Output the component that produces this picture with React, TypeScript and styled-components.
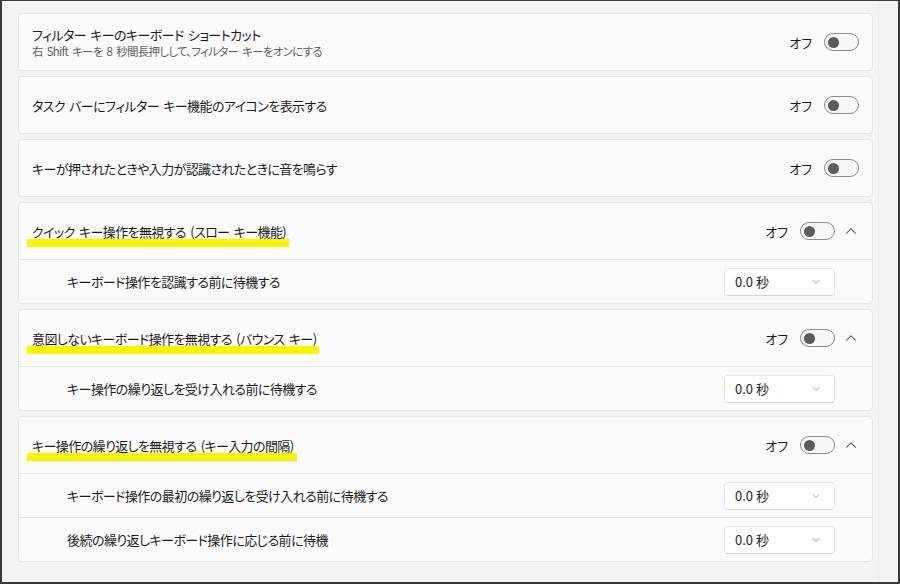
import React from 'react'
import styled, { createGlobalStyle } from 'styled-components'
import { ChevronUp, ChevronDown } from 'lucide-react'

interface SubSetting {
  label: string
  value: string
}

interface Setting {
  title: string
  description?: string
  highlight?: boolean
  subs?: SubSetting[]
}

const settings: Setting[] = [
  {
    title: 'フィルター キーのキーボード ショートカット',
    description: '右 Shift キーを 8 秒間長押しして、フィルター キーをオンにする',
  },
  { title: 'タスク バーにフィルター キー機能のアイコンを表示する' },
  { title: 'キーが押されたときや入力が認識されたときに音を鳴らす' },
  {
    title: 'クイック キー操作を無視する (スロー キー機能)',
    highlight: true,
    subs: [{ label: 'キーボード操作を認識する前に待機する', value: '0.0 秒' }],
  },
  {
    title: '意図しないキーボード操作を無視する (バウンス キー)',
    highlight: true,
    subs: [{ label: 'キー操作の繰り返しを受け入れる前に待機する', value: '0.0 秒' }],
  },
  {
    title: 'キー操作の繰り返しを無視する (キー入力の間隔)',
    highlight: true,
    subs: [
      { label: 'キーボード操作の最初の繰り返しを受け入れる前に待機する', value: '0.0 秒' },
      { label: '後続の繰り返しキーボード操作に応じる前に待機', value: '0.0 秒' },
    ],
  },
]

export default function App() {
  return (
    <>
      <GlobalStyle />
      <Frame>
        <Content>
          {settings.map((s, i) => (
            <Card key={i}>
              <Header hasSubs={!!s.subs}>
                <TextBlock>
                  <Title>{s.highlight ? <Marked>{s.title}</Marked> : s.title}</Title>
                  {s.description && <Description>{s.description}</Description>}
                </TextBlock>
                <StateLabel>オフ</StateLabel>
                <Toggle>
                  <Knob />
                </Toggle>
                {s.subs && (
                  <Expand>
                    <ChevronUp size={18} strokeWidth={1.4} />
                  </Expand>
                )}
              </Header>
              {s.subs &&
                s.subs.map((sub, j) => (
                  <SubRow key={j}>
                    <SubLabel>{sub.label}</SubLabel>
                    <Select>
                      <span>{sub.value}</span>
                      <ChevronDown size={12} strokeWidth={1.5} />
                    </Select>
                  </SubRow>
                ))}
            </Card>
          ))}
        </Content>
        <ScrollTrack />
      </Frame>
    </>
  )
}

const GlobalStyle = createGlobalStyle`
  html, body {
    margin: 0;
    padding: 0;
    background: #f3f3f3;
  }
  body {
    font-family: "Noto Sans CJK JP", "Noto Sans", sans-serif;
    font-feature-settings: "palt";
    color: #1b1b1b;
  }
`

const Frame = styled.div`
  box-sizing: border-box;
  width: 900px;
  height: 584px;
  display: flex;
  background: #f3f3f3;
  border-style: solid;
  border-color: #3a3a3a;
  border-width: 1px 2px 2px 2px;
  overflow: hidden;
`

const Content = styled.div`
  width: 855px;
  padding: 12px 0 0 16px;
  display: flex;
  flex-direction: column;
  gap: 5px;
`

const ScrollTrack = styled.div`
  margin-left: 5px;
  flex: 1;
  border-left: 1px solid #ececec;
  background: #f2f2f2;
`

const Card = styled.div`
  box-sizing: border-box;
  background: #fbfbfb;
  border: 1px solid #e6e6e6;
  border-radius: 4px;
`

const Header = styled.div<{ hasSubs: boolean }>`
  height: 56px;
  display: flex;
  align-items: center;
  padding: 0 ${p => (p.hasSubs ? '12px' : '13px')} 0 13px;
`

const TextBlock = styled.div`
  flex: 1;
  display: flex;
  flex-direction: column;
  gap: 1px;
`

const Title = styled.div`
  font-size: 13px;
  line-height: 17px;
  letter-spacing: -0.6px;
  word-spacing: 2px;
`

const Marked = styled.span`
  position: relative;
  z-index: 0;

  &::after {
    content: '';
    position: absolute;
    left: -5px;
    right: -3px;
    bottom: -6px;
    height: 8px;
    background: #f8f400;
    z-index: -1;
  }
`

const Description = styled.div`
  font-size: 11.5px;
  line-height: 15px;
  letter-spacing: -0.7px;
  word-spacing: 2px;
  color: #606060;
`

const StateLabel = styled.span`
  font-size: 13px;
  margin-right: 12px;
`

const Toggle = styled.div`
  box-sizing: border-box;
  width: 35px;
  height: 18px;
  border: 1px solid #8c8c8c;
  border-radius: 9px;
  background: #f7f7f7;
  display: flex;
  align-items: center;
  padding-left: 3px;
`

const Knob = styled.div`
  width: 11px;
  height: 11px;
  border-radius: 50%;
  background: #5c5c5c;
`

const Expand = styled.div`
  width: 20px;
  margin-left: 5px;
  display: flex;
  justify-content: flex-end;
  color: #444;
`

const SubRow = styled.div`
  height: 43px;
  display: flex;
  align-items: center;
  border-top: 1px solid #e8e8e8;
  padding: 0 37px 0 48px;
`

const SubLabel = styled.div`
  flex: 1;
  font-size: 13px;
  letter-spacing: -0.55px;
`

const Select = styled.div`
  box-sizing: border-box;
  width: 111px;
  height: 28px;
  display: flex;
  align-items: center;
  justify-content: space-between;
  padding: 0 12px 0 10px;
  background: #ffffff;
  border: 1px solid #e7e7e7;
  border-bottom-color: #d6d6d6;
  border-radius: 4px;
  font-size: 13px;
  color: #1b1b1b;

  svg {
    color: #777;
  }
`
